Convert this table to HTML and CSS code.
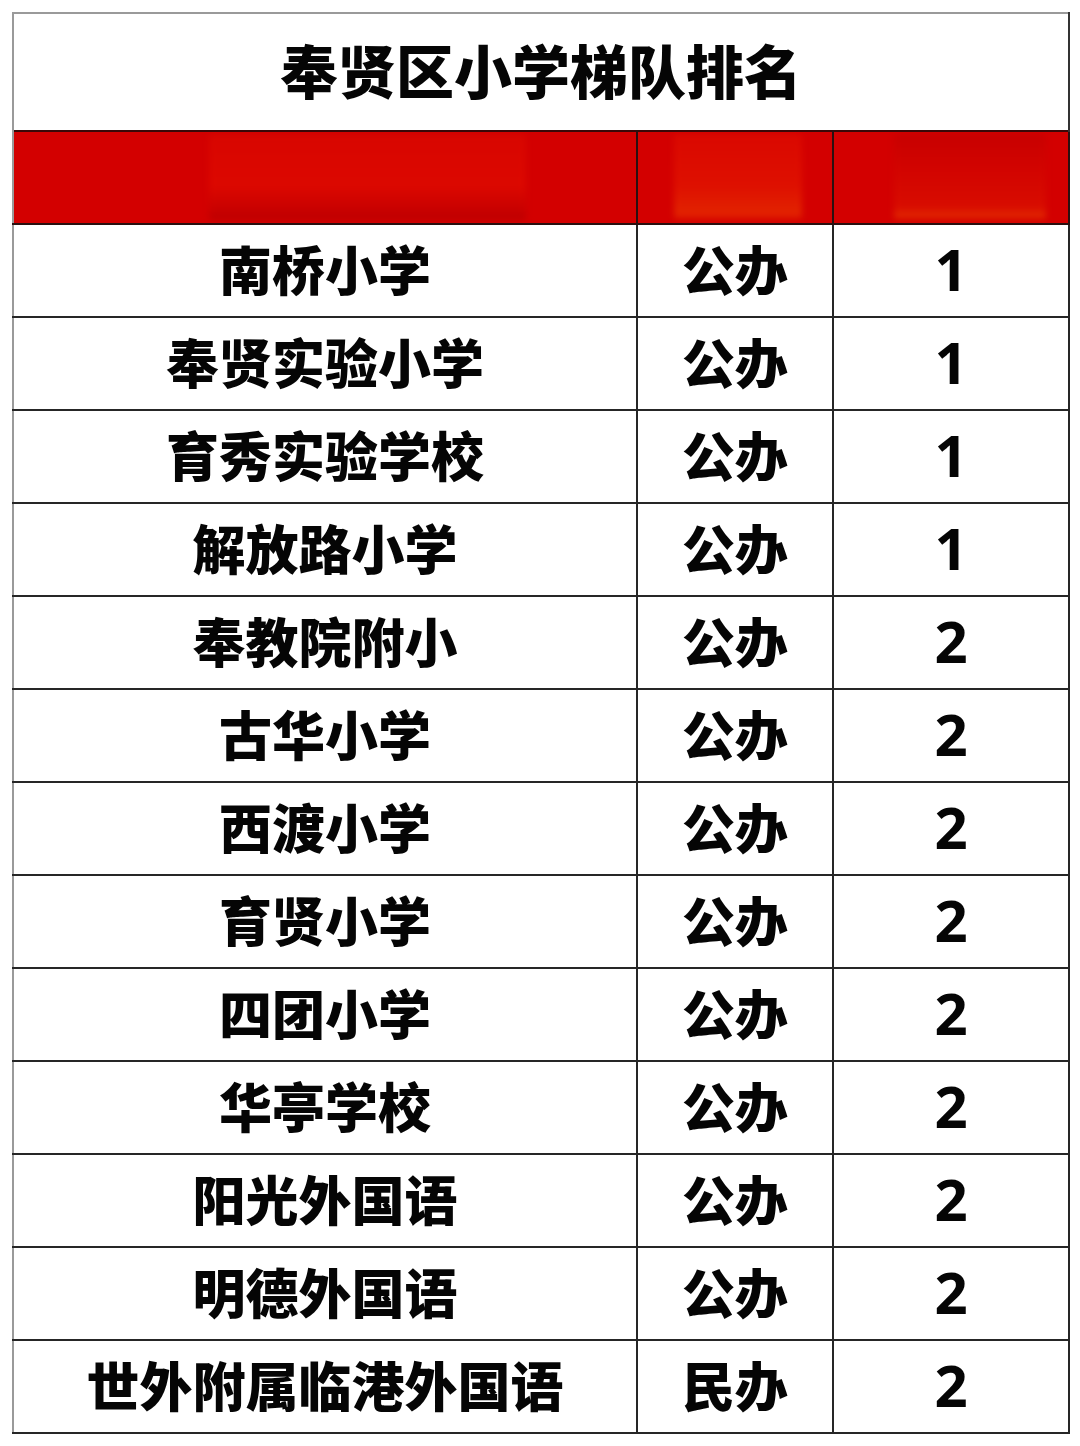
FILE: index.html
```html
<!DOCTYPE html>
<html lang="zh">
<head>
<meta charset="utf-8">
<title>奉贤区小学梯队排名</title>
<link rel="stylesheet" href="styles.css">
</head>
<body>
<table class="rank">
  <colgroup>
    <col class="c-name">
    <col class="c-type">
    <col class="c-tier">
  </colgroup>
  <thead>
    <tr class="title-row"><th colspan="3" class="title">奉贤区小学梯队排名</th></tr>
    <tr class="head-row">
      <th class="head"><span class="blur b1"></span></th>
      <th class="head"><span class="blur b2"></span></th>
      <th class="head"><span class="blur b3"></span></th>
    </tr>
  </thead>
  <tbody>
    <tr><td class="name">南桥小学</td><td class="type">公办</td><td class="tier">1</td></tr>
    <tr><td class="name">奉贤实验小学</td><td class="type">公办</td><td class="tier">1</td></tr>
    <tr><td class="name">育秀实验学校</td><td class="type">公办</td><td class="tier">1</td></tr>
    <tr><td class="name">解放路小学</td><td class="type">公办</td><td class="tier">1</td></tr>
    <tr><td class="name">奉教院附小</td><td class="type">公办</td><td class="tier">2</td></tr>
    <tr><td class="name">古华小学</td><td class="type">公办</td><td class="tier">2</td></tr>
    <tr><td class="name">西渡小学</td><td class="type">公办</td><td class="tier">2</td></tr>
    <tr><td class="name">育贤小学</td><td class="type">公办</td><td class="tier">2</td></tr>
    <tr><td class="name">四团小学</td><td class="type">公办</td><td class="tier">2</td></tr>
    <tr><td class="name">华亭学校</td><td class="type">公办</td><td class="tier">2</td></tr>
    <tr><td class="name">阳光外国语</td><td class="type">公办</td><td class="tier">2</td></tr>
    <tr><td class="name">明德外国语</td><td class="type">公办</td><td class="tier">2</td></tr>
    <tr><td class="name">世外附属临港外国语</td><td class="type">民办</td><td class="tier">2</td></tr>
  </tbody>
</table>
</body>
</html>
```
FILE: styles.css
```css
html, body {
  margin: 0;
  padding: 0;
  background: #ffffff;
}
body {
  padding: 12px 12px 0 12px;
  font-family: "Noto Sans CJK SC", "Noto Sans", sans-serif;
  color: #050505;
}
.rank {
  width: 1056px;
  border-collapse: collapse;
  table-layout: fixed;
  border-top: 2px solid #9a9a9a;
  border-left: 2px solid #9a9a9a;
}
.c-name { width: 624px; }
.c-type { width: 196px; }
.c-tier { width: 236px; }

.title-row { height: 118px; }
.title {
  font-size: 58px;
  font-weight: 900;
  text-align: center;
  vertical-align: middle;
  line-height: 1;
  padding: 0 0 6px 0;
  border-right: 2px solid #333;
  border-left: 2px solid #9a9a9a;
}
.head-row { height: 93px; }
.head {
  position: relative;
  padding: 0;
  background: #d30000;
  border: 2px solid #2a1010;
  border-top: 2px solid #3a0808;
  border-left: 2px solid #9a9a9a;
  overflow: hidden;
}
.head + .head { border-left: 2px solid #2a1010; }
.blur {
  position: absolute;
  top: 2px;
  bottom: 3px;
  border-radius: 3px;
  filter: blur(3px);
}
.b1 { left: 195px; right: 110px; background: linear-gradient(180deg, #d80600 0%, #dc0800 60%, #c60000 92%, #b80000 100%); }
.b2 { left: 36px; right: 30px; background: linear-gradient(180deg, #da0800 0%, #de1000 60%, #e22400 94%, #d60600 100%); }
.b3 { left: 60px; right: 22px; background: linear-gradient(180deg, #c80000 0%, #d20400 40%, #d80c00 85%, #e22a00 96%, #d40400 100%); }

tbody tr { height: 93px; }
tbody td {
  border: 2px solid #262626;
  text-align: center;
  vertical-align: middle;
  padding: 0 0 4px 0;
  line-height: 1;
  font-weight: 900;
}
tbody td.name { border-left: 2px solid #9a9a9a; }
.name, .type {
  font-size: 53px;
}
.tier {
  font-family: "Noto Sans", "Noto Sans CJK SC", sans-serif;
  font-weight: 700;
  font-size: 58px;
}
```
